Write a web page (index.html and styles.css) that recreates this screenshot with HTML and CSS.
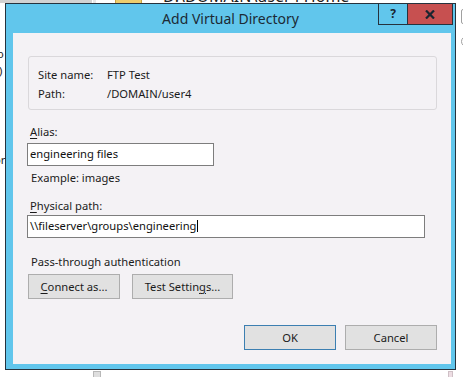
FILE: index.html
```html
<!DOCTYPE html>
<html>
<head>
<meta charset="utf-8">
<title>Add Virtual Directory</title>
<link rel="stylesheet" href="styles.css">
</head>
<body>
<div class="desk">
  <div class="bg-strip"></div>
  <div class="bg-sep"></div>
  <div class="bg-folder"></div>
  <div class="bg-heading">D:\DOMAIN\user4 Home</div>
  <div class="bg-frag f1">o</div>
  <div class="bg-frag f2">)</div>
  <div class="bg-frag f3">or</div>
  <div class="bg-box"></div>
  <div class="bg-radio"></div>
  <div class="bg-bottom b1"></div>
  <div class="bg-bottom b2"></div>
</div>

<div class="dialog">
  <div class="titlebar">
    <span></span>
    <div class="title">Add Virtual Directory</div>
    <div class="caption">
      <div class="cap help">?</div>
      <div class="cap close">
        <svg width="10" height="9" viewBox="0 0 10 9"><path d="M1 0.5 L9 8.5 M9 0.5 L1 8.5" stroke="#1a2530" stroke-width="2.2" fill="none"/></svg>
      </div>
    </div>
  </div>
  <div class="client">
    <div class="infobox">
      <span class="k">Site name:</span><span>FTP Test</span>
      <span class="k">Path:</span><span>/DOMAIN/user4</span>
    </div>
    <div class="lbl lbl-alias"><u>A</u>lias:</div>
    <div class="field field-alias">engineering files</div>
    <div class="lbl lbl-example">Example: images</div>
    <div class="lbl lbl-path"><u>P</u>hysical path:</div>
    <div class="field field-path">\\fileserver\groups\engineering<span class="caret"></span></div>
    <div class="lbl lbl-pass">Pass-through authentication</div>
    <div class="btnrow">
      <div class="btn btn-connect"><u>C</u>onnect as...</div>
      <div class="btn btn-test">Test Settin<u>g</u>s...</div>
    </div>
    <div class="footer">
      <div class="btn btn-default">OK</div>
      <div class="btn">Cancel</div>
    </div>
  </div>
</div>
</body>
</html>
```
FILE: styles.css
```css
* { box-sizing: border-box; }
html, body { margin: 0; padding: 0; }
body {
  width: 463px;
  height: 377px;
  overflow: hidden;
  position: relative;
  background: #ffffff;
  font-family: "Noto Sans", "Open Sans", sans-serif;
  font-size: 11.2px;
  color: #1b1b1b;
}

/* background window, partly hidden behind the dialog */
.desk { position: absolute; left: 0; top: 0; width: 463px; height: 377px; }
.bg-strip { position: absolute; left: 0; top: 0; width: 92px; height: 3px; background: #d2d2d2; }
.bg-sep { position: absolute; left: 93px; top: 0; width: 3px; height: 3px; background: #e6e6e6; }
.bg-folder { position: absolute; left: 115px; top: -6px; width: 27px; height: 10px; background: #eecd6c; border: 1px solid #c9a445; }
.bg-heading { position: absolute; left: 163px; top: -12px; font-size: 16px; line-height: 16px; white-space: nowrap; color: #202020; }
.bg-frag { position: absolute; font-size: 11.2px; line-height: 14px; color: #222; }
.f1 { left: -3px; top: 47px; }
.f2 { left: -1px; top: 64px; }
.f3 { left: -6px; top: 153px; }
.bg-box { position: absolute; left: 461px; top: 9px; width: 20px; height: 15px; border: 1px solid #a0a0a0; border-radius: 2px; }
.bg-radio { position: absolute; left: 461px; top: 36px; width: 11px; height: 11px; border: 1px solid #a0a0a0; border-radius: 50%; }
.bg-bottom { position: absolute; top: 371px; height: 8px; border: 1px solid #b8b8b8; }
.b1 { left: 93px; width: 8px; background: #dedede; }
.b2 { left: 448px; width: 5px; background: #eddde3; border-color: #cfc0c6; }

/* dialog window */
.dialog {
  position: absolute;
  left: 5px;
  top: 3px;
  width: 451px;
  height: 367px;
  background: #61c6ec;
  border: 1px solid #26323d;
  display: flex;
  flex-direction: column;
}
.titlebar {
  height: 29px;
  flex: none;
  display: grid;
  grid-template-columns: 1fr auto 1fr;
  align-items: start;
}
.title {
  font-size: 14px;
  line-height: 29px;
  color: #1c2a35;
  white-space: nowrap;
}
.caption { justify-self: end; display: flex; margin-right: 2px; }
.cap {
  height: 21px;
  border: 1px solid #26323d;
  border-top: none;
  display: flex;
  align-items: center;
  justify-content: center;
}
.cap.help {
  width: 29px;
  border-right: none;
  font-weight: bold;
  font-size: 12px;
  color: #1a2530;
  line-height: 1;
  padding-bottom: 1px;
}
.cap.close { width: 46px; background: #c75050; }

.client {
  flex: 1;
  margin: 0 4px 5px 7px;
  background: #f4f2f5;
  padding-top: 23px;
  display: flex;
  flex-direction: column;
  align-items: flex-start;
}

.infobox {
  margin-left: 15px;
  width: 409px;
  border: 1px solid #dad8db;
  border-radius: 3px;
  padding: 8px 9px 6px 9px;
  display: grid;
  grid-template-columns: 69px 1fr;
  line-height: 19px;
}

.lbl { margin-left: 17px; line-height: 16px; white-space: nowrap; }
.lbl u, .btn u { text-underline-offset: 2px; }
.lbl-alias { margin-top: 14px; }
.lbl-example { margin-top: 4px; margin-left: 18px; }
.lbl-path { margin-top: 12px; }
.lbl-pass { margin-top: 16px; margin-left: 18px; }

.field {
  margin-left: 14px;
  height: 23px;
  background: #ffffff;
  border: 1px solid #7d7d7d;
  padding: 2px 2px;
  line-height: 16px;
  white-space: nowrap;
  color: #111;
}
.field-alias { margin-top: 3px; width: 187px; }
.field-path { margin-top: 1px; width: 398px; }
.caret {
  display: inline-block;
  width: 1px;
  height: 12px;
  background: #000;
  vertical-align: -2px;
  margin-left: 0;
}

.btn {
  height: 25px;
  width: 92px;
  background: #e1e1e1;
  border: 1px solid #adadad;
  line-height: 23px;
  text-align: center;
  white-space: nowrap;
  color: #1b1b1b;
}
.btnrow { display: flex; gap: 12px; margin-left: 15px; margin-top: 4px; }
.btn-test { width: 101px; }
.footer {
  align-self: stretch;
  display: flex;
  justify-content: flex-end;
  gap: 9px;
  margin-top: 26px;
  margin-right: 14px;
}
.btn-default { border-color: #3c7fb1; }
```
